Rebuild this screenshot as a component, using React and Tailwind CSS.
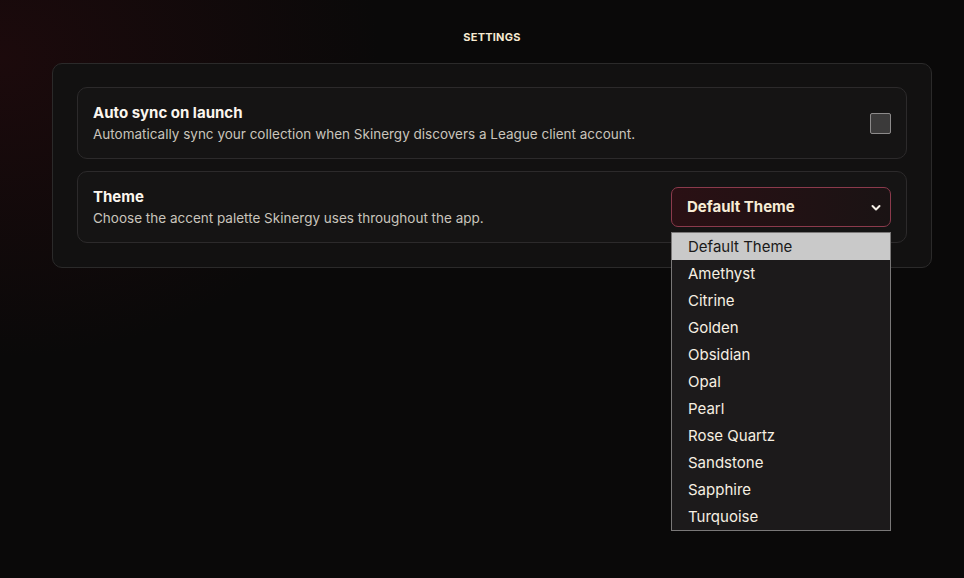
import React, { useState } from "react";

const THEMES = [
  "Default Theme",
  "Amethyst",
  "Citrine",
  "Golden",
  "Obsidian",
  "Opal",
  "Pearl",
  "Rose Quartz",
  "Sandstone",
  "Sapphire",
  "Turquoise",
];

/**
 * Settings card row
 */
function SettingRow({ title, description, children }) {
  return (
    <div className="relative flex items-center justify-between rounded-[10px] border border-[#2c2a2b] bg-[#151414] px-[15px] h-[72px]">
      <div className="flex flex-col">
        <span className="text-[15px] font-bold leading-[20px] text-[#fbf6ee]">{title}</span>
        <span className="mt-[2px] text-[13.5px] leading-[18px] text-[#c9c4bc]">{description}</span>
      </div>
      {children}
    </div>
  );
}

export default function App() {
  const [autoSync, setAutoSync] = useState(false);
  const [theme, setTheme] = useState("Default Theme");

  return (
    <div
      className="relative h-[578px] w-[964px] overflow-hidden bg-[#0a0909] bg-[radial-gradient(ellipse_380px_300px_at_0%_10%,#1c0a0c,transparent)]"
      style={{ fontFamily: "Inter, 'Noto Sans', sans-serif" }}
    >
      <div className="flex flex-col items-center pt-[31px] pl-[20px]">
        <h1 className="text-[11px] font-bold uppercase tracking-[0.02em] text-[#f6ead2] leading-[13px]">Settings</h1>

        <div className="mt-[19px] w-[880px] rounded-[10px] border border-[#2b2a2a] bg-[#121111] px-[24px] pt-[23px] pb-[24px] flex flex-col gap-[12px]">
          <SettingRow
            title="Auto sync on launch"
            description="Automatically sync your collection when Skinergy discovers a League client account."
          >
            <button
              onClick={() => setAutoSync(!autoSync)}
              className="h-[21px] w-[21px] rounded-[2px] border border-[#8c8a8a] bg-[#3b3a3a]"
            />
          </SettingRow>

          <SettingRow
            title="Theme"
            description="Choose the accent palette Skinergy uses throughout the app."
          >
            <div className="relative">
              <button className="flex h-[40px] w-[220px] items-center justify-between rounded-[7px] border border-[#8b3a4c] bg-[linear-gradient(90deg,#2a1014,#1a1314)] pl-[15px] pr-[9px]">
                <span className="text-[15px] font-bold text-[#f7ecd6]">{theme}</span>
                <svg width="10" height="8" viewBox="0 0 10 8" className="mt-[1px]">
                  <path d="M1.5 2L5 5.5L8.5 2" fill="none" stroke="#f5efe6" strokeWidth="2" strokeLinecap="round" strokeLinejoin="round" />
                </svg>
              </button>

              {/* open native-style list */}
              <ul className="absolute left-0 top-[45px] z-10 w-[220px] border border-[#7a7878] bg-[#1c1a1b]">
                {THEMES.map((t) => (
                  <li
                    key={t}
                    onClick={() => setTheme(t)}
                    className={`h-[27px] pl-[16px] text-[15px] leading-[27px] ${
                      t === theme ? "bg-[#c9c9c9] text-[#1a1a1a]" : "text-[#f6efe2]"
                    }`}
                  >
                    {t}
                  </li>
                ))}
              </ul>
            </div>
          </SettingRow>
        </div>
      </div>
    </div>
  );
}
